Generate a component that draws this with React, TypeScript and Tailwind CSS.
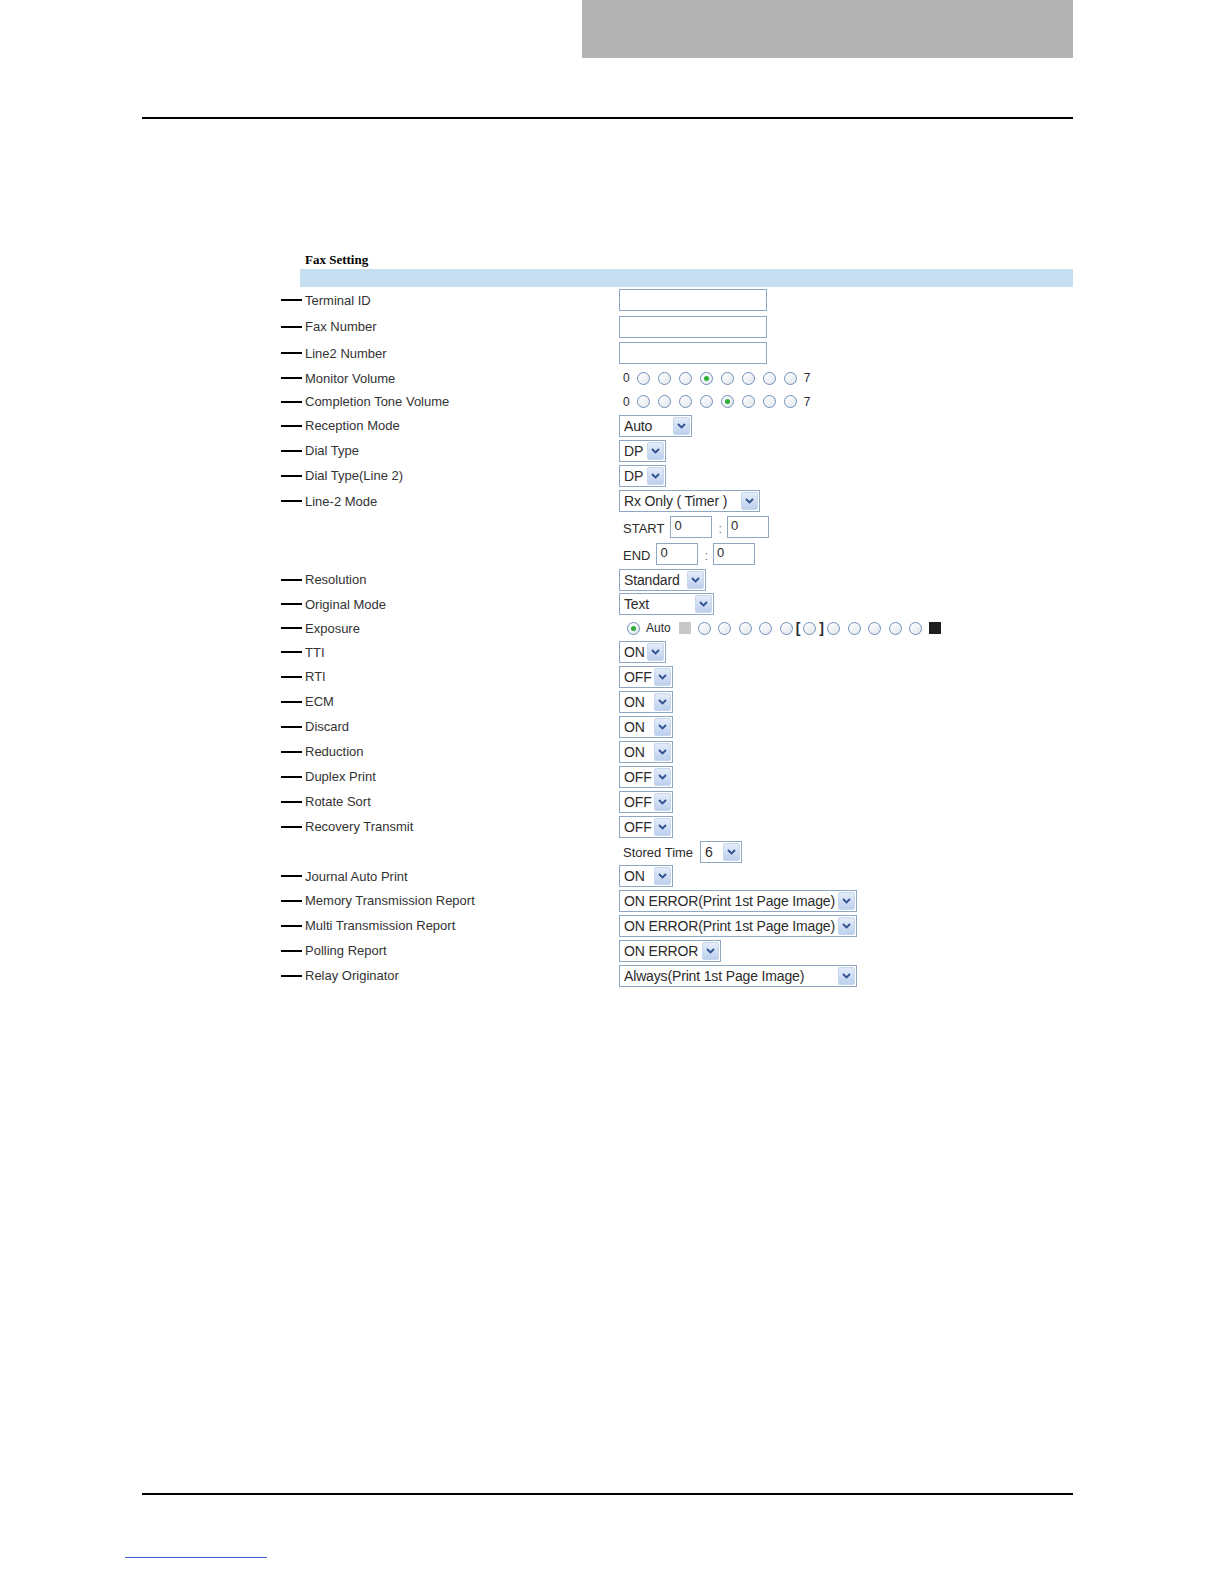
import React from "react";

const LABEL_FONT = { fontFamily: '"Liberation Sans", Arial, sans-serif' };

function Chevron() {
  return (
    <svg width="9" height="6" viewBox="0 0 9 6">
      <path d="M1 1 L4.5 4.5 L8 1" fill="none" stroke="#2f4f8f" strokeWidth="1.8" />
    </svg>
  );
}

function Select({ w, text }: { w: number; text: string }) {
  return (
    <div
      className="flex h-[22px] items-center border border-[#8ea8c4] bg-white"
      style={{ width: w }}
    >
      <span className="flex-1 whitespace-nowrap pl-[4px] text-[14px] leading-none tracking-[-0.15px] text-[#2b2b2b]">{text}</span>
      <span className="mr-[1px] flex h-[18px] w-[17px] items-center justify-center rounded-[2px] border border-[#c7d7ee] bg-gradient-to-b from-[#e3ecf9] to-[#bdd0ee]">
        <Chevron />
      </span>
    </div>
  );
}

function TextBox({ w = 148, value = "" }: { w?: number; value?: string }) {
  return (
    <div
      className="flex h-[22px] items-start border border-[#8ea8c4] bg-white pl-[3px] pt-[1px] text-[13px] leading-[16px] text-[#2b2b2b]"
      style={{ width: w }}
    >
      {value}
    </div>
  );
}

function Radio({ on = false }: { on?: boolean }) {
  return (
    <span className="flex h-[13px] w-[13px] shrink-0 items-center justify-center rounded-full border border-[#6f90b8] bg-gradient-to-br from-[#ffffff] to-[#e2e6ec]">
      {on && <span className="h-[5px] w-[5px] rounded-full bg-[#2fae3a]" />}
    </span>
  );
}

function Volume({ sel }: { sel: number }) {
  return (
    <div className="flex items-center pl-[4px] text-[12px] text-[#2b2b2b]">
      <span className="mr-[7px]">0</span>
      <div className="flex items-center gap-[8px]">
        {[0, 1, 2, 3, 4, 5, 6, 7].map((i) => (
          <Radio key={i} on={i === sel} />
        ))}
      </div>
      <span className="ml-[7px]">7</span>
    </div>
  );
}

function Exposure() {
  return (
    <div className="flex items-center pl-[8px] text-[12px] text-[#2b2b2b]">
      <Radio on />
      <span className="ml-[6px]">Auto</span>
      <span className="ml-[8px] h-[12px] w-[12px] bg-[#c8c8c8]" />
      <div className="ml-[7px] flex items-center gap-[7.5px]">
        <Radio />
        <Radio />
        <Radio />
        <Radio />
        <Radio />
      </div>
      <span className="ml-[3px] text-[14px] font-bold leading-none">[</span>
      <span className="ml-[3px]"><Radio /></span>
      <span className="ml-[3px] text-[14px] font-bold leading-none">]</span>
      <div className="ml-[3px] flex items-center gap-[7.5px]">
        <Radio />
        <Radio />
        <Radio />
        <Radio />
        <Radio />
      </div>
      <span className="ml-[7px] h-[12px] w-[12px] bg-[#1e1e1e]" />
    </div>
  );
}

type Row = { label?: string; h: number; ctl: React.ReactNode };

const rows: Row[] = [
  { label: "Terminal ID", h: 26, ctl: <TextBox /> },
  { label: "Fax Number", h: 27, ctl: <TextBox /> },
  { label: "Line2 Number", h: 26, ctl: <TextBox /> },
  { label: "Monitor Volume", h: 24, ctl: <Volume sel={3} /> },
  { label: "Completion Tone Volume", h: 23, ctl: <Volume sel={4} /> },
  { label: "Reception Mode", h: 25, ctl: <Select w={73} text="Auto" /> },
  { label: "Dial Type", h: 25, ctl: <Select w={47} text="DP" /> },
  { label: "Dial Type(Line 2)", h: 25, ctl: <Select w={47} text="DP" /> },
  { label: "Line-2 Mode", h: 26, ctl: <Select w={141} text="Rx Only ( Timer )" /> },
  {
    h: 26,
    ctl: (
      <div className="flex items-center pl-[4px] text-[13px] text-[#2b2b2b]">
        <span className="mt-[4px]">START</span>
        <span className="ml-[6px]"><TextBox w={42} value="0" /></span>
        <span className="ml-[6px] mr-[5px] mt-[4px] text-[#777]">:</span>
        <TextBox w={42} value="0" />
      </div>
    ),
  },
  {
    h: 27,
    ctl: (
      <div className="flex items-center pl-[4px] text-[13px] text-[#2b2b2b]">
        <span className="mt-[4px]">END</span>
        <span className="ml-[6px]"><TextBox w={42} value="0" /></span>
        <span className="ml-[6px] mr-[5px] mt-[4px] text-[#777]">:</span>
        <TextBox w={42} value="0" />
      </div>
    ),
  },
  { label: "Resolution", h: 25, ctl: <Select w={87} text="Standard" /> },
  { label: "Original Mode", h: 24, ctl: <Select w={95} text="Text" /> },
  { label: "Exposure", h: 24, ctl: <Exposure /> },
  { label: "TTI", h: 24, ctl: <Select w={47} text="ON" /> },
  { label: "RTI", h: 25, ctl: <Select w={54} text="OFF" /> },
  { label: "ECM", h: 25, ctl: <Select w={54} text="ON" /> },
  { label: "Discard", h: 25, ctl: <Select w={54} text="ON" /> },
  { label: "Reduction", h: 25, ctl: <Select w={54} text="ON" /> },
  { label: "Duplex Print", h: 25, ctl: <Select w={54} text="OFF" /> },
  { label: "Rotate Sort", h: 25, ctl: <Select w={54} text="OFF" /> },
  { label: "Recovery Transmit", h: 25, ctl: <Select w={54} text="OFF" /> },
  {
    h: 25,
    ctl: (
      <div className="flex items-center pl-[4px] text-[13px] text-[#2b2b2b]">
        <span className="mt-[2px]">Stored Time</span>
        <span className="ml-[7px]"><Select w={42} text="6" /></span>
      </div>
    ),
  },
  { label: "Journal Auto Print", h: 24, ctl: <Select w={54} text="ON" /> },
  { label: "Memory Transmission Report", h: 25, ctl: <Select w={238} text="ON ERROR(Print 1st Page Image)" /> },
  { label: "Multi Transmission Report", h: 25, ctl: <Select w={238} text="ON ERROR(Print 1st Page Image)" /> },
  { label: "Polling Report", h: 25, ctl: <Select w={102} text="ON ERROR" /> },
  { label: "Relay Originator", h: 25, ctl: <Select w={238} text="Always(Print 1st Page Image)" /> },
];

export default function App() {
  return (
    <div className="h-[1584px] w-full overflow-hidden bg-white" style={LABEL_FONT}>
      <div className="ml-[582px] h-[58px] w-[491px] bg-[#b3b3b3]" />
      <div className="ml-[142px] mt-[59px] h-[2px] w-[931px] bg-black" />

      <div className="pl-[281px] pt-[133px]">
        <div
          className="pl-[24px] text-[13px] font-bold leading-[16px] text-black"
          style={{ fontFamily: '"Liberation Serif", "Times New Roman", serif' }}
        >
          Fax Setting
        </div>
        <div className="ml-[19px] mt-[1px] h-[18px] w-[773px] bg-[#c6dff1]" />
        <div className="flex flex-col">
          {rows.map((r, i) => (
            <div key={i} className="flex items-center" style={{ height: r.h }}>
              <div className="flex w-[338px] items-center">
                {r.label && (
                  <>
                    <span className="h-[2px] w-[21px] bg-black" />
                    <span className="ml-[3px] text-[13px] leading-none text-[#333]">{r.label}</span>
                  </>
                )}
              </div>
              <div className="flex items-center">{r.ctl}</div>
            </div>
          ))}
        </div>
      </div>

      <div className="ml-[142px] mt-[505px] h-[2px] w-[931px] bg-black" />
      <div className="ml-[125px] mt-[62px] h-[1px] w-[142px] bg-[#3d63c9]" />
    </div>
  );
}
